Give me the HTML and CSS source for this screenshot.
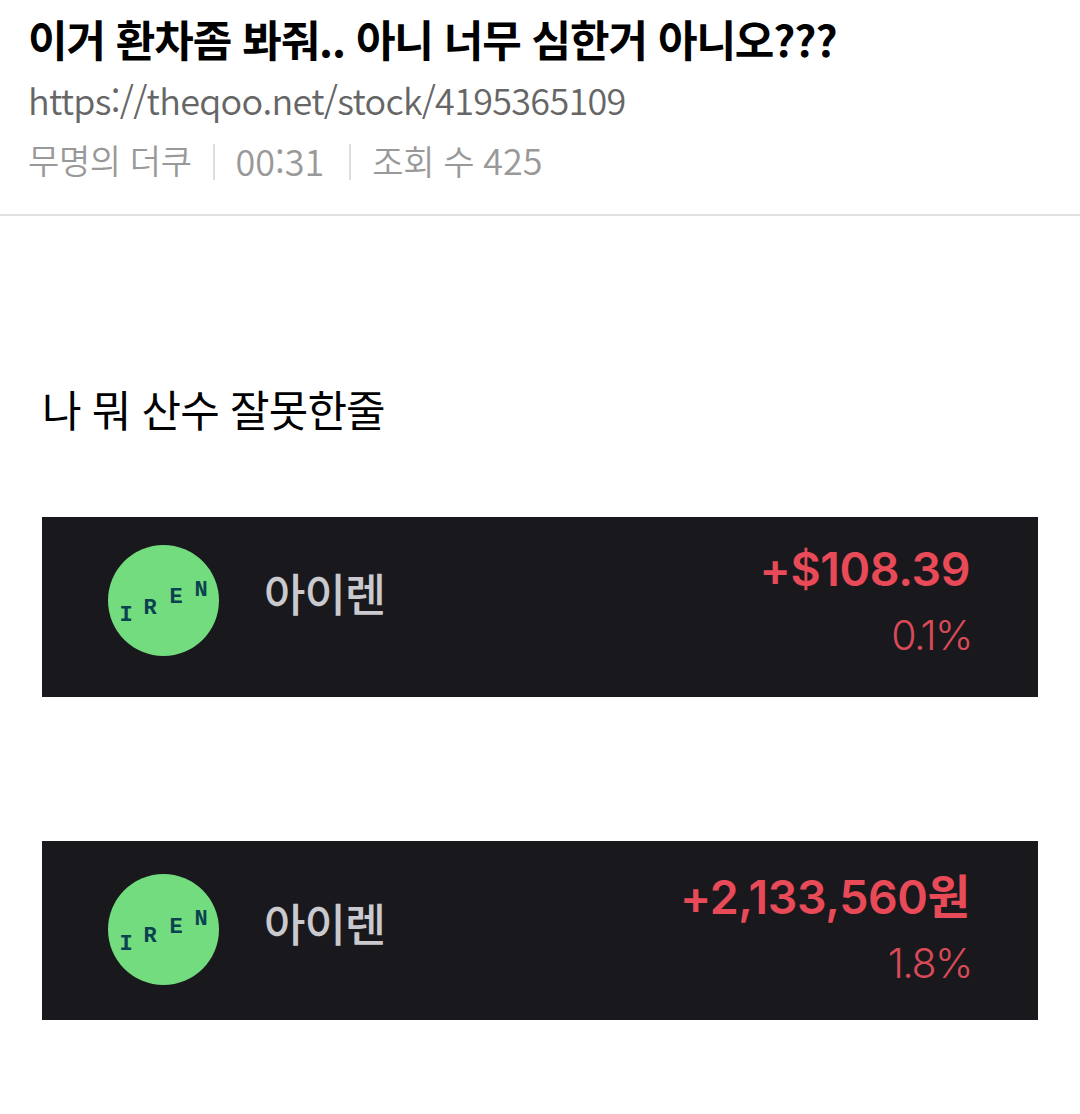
FILE: index.html
```html
<!DOCTYPE html>
<html lang="ko">
<head>
<meta charset="utf-8">
<title>이거 환차좀 봐줘</title>
<link rel="stylesheet" href="styles.css">
</head>
<body>
<header class="head">
  <h1 class="title">이거 환차좀 봐줘.. 아니 너무 심한거 아니오???</h1>
  <div class="url">https://theqoo.net/stock/4195365109</div>
  <div class="meta"><span>무명의 더쿠</span><i class="sep"></i><span class="num">00:31</span><i class="sep wide"></i><span>조회 수 <span class="num">425</span></span></div>
</header>
<main class="body">
  <p class="text">나 뭐 산수 잘못한줄</p>
  <section class="card first">
    <svg class="logo" viewBox="0 0 111 111"><circle cx="55.5" cy="55.5" r="55.5" fill="#72dc7e"/><g class="logo-text"><text x="18" y="76">I</text><text x="42" y="69">R</text><text x="68" y="58">E</text><text x="93" y="51">N</text></g></svg>
    <div class="name">아이렌</div>
    <div class="nums"><div class="amount">+$108.39</div><div class="pct">0.1%</div></div>
  </section>
  <section class="card second">
    <svg class="logo" viewBox="0 0 111 111"><circle cx="55.5" cy="55.5" r="55.5" fill="#72dc7e"/><g class="logo-text"><text x="18" y="76">I</text><text x="42" y="68">R</text><text x="68" y="59">E</text><text x="93" y="51">N</text></g></svg>
    <div class="name">아이렌</div>
    <div class="nums"><div class="amount">+2,133,560원</div><div class="pct">1.8%</div></div>
  </section>
</main>
</body>
</html>
```
FILE: styles.css
```css
html, body { margin: 0; padding: 0; background: #fff; }
body { font-family: "Noto Sans CJK KR", "Noto Sans", sans-serif; }
.head { box-sizing: border-box; height: 216px; padding: 10px 28px 0; border-bottom: 2px solid #e0e0e0; }
.title { margin: 0; font-size: 43px; line-height: 56px; font-weight: 700; color: #000; letter-spacing: -1.1px; white-space: nowrap; }
.url { margin-top: 5px; font-size: 36px; line-height: 56px; color: #666; letter-spacing: -0.72px; font-weight: 350; }
.meta { margin-top: 4px; display: flex; align-items: center; font-size: 34px; line-height: 56px; color: #999; font-weight: 350; letter-spacing: -0.4px; }
.num { font-size: 36px; letter-spacing: 0; }
.sep { width: 2px; height: 36px; background: #ddd; margin: 4px 21px 0 21px; }
.wide { margin-left: 25px; }
.body { padding: 157px 42px 0; }
.text { margin: 0 0 74px; font-size: 43px; line-height: 70px; color: #000; font-weight: 400; letter-spacing: -0.9px; }
.card { display: flex; align-items: center; height: 180px; background: #19191d; padding: 0 66px; box-sizing: border-box; }
.second { margin-top: 144px; height: 179px; }
.logo { width: 111px; height: 111px; flex: none; }
.first .logo { margin-bottom: 13px; }
.second .logo { margin-bottom: 3px; }
.logo-text text { font-family: "Liberation Mono", monospace; font-size: 22px; font-weight: 700; fill: #0a4250; text-anchor: middle; }
.name { margin-left: 45px; font-size: 45px; line-height: 60px; color: #c9c9ce; font-weight: 500; letter-spacing: -1px; }
.first .name { margin-bottom: 28px; }
.second .name { margin-bottom: 16px; }
.nums { margin-left: auto; text-align: right; }
.first .nums { margin-bottom: 14px; }
.second .nums { margin-bottom: 6px; }
.amount { font-family: "Inter", "Noto Sans CJK KR", sans-serif; font-size: 46.5px; line-height: 52px; color: #e84a58; font-weight: 600; letter-spacing: -0.4px; margin-right: 2px; }
.pct { font-family: "Inter", sans-serif; margin-top: 18px; font-size: 41px; line-height: 44px; color: #d94a58; font-weight: 300; letter-spacing: -1.5px; }
```
